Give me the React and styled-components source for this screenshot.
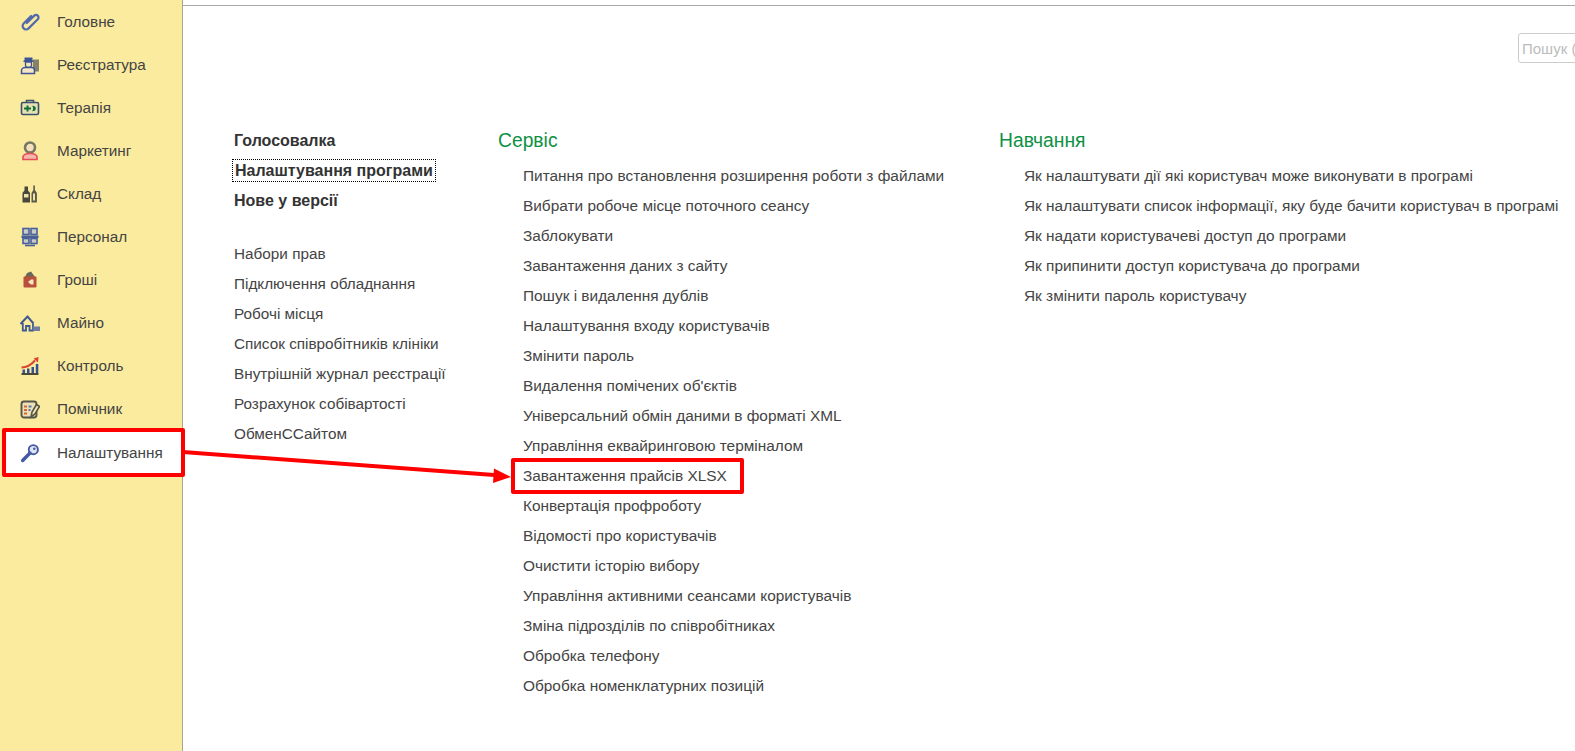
import React from 'react'
import styled, { createGlobalStyle } from 'styled-components'

const Global = createGlobalStyle`
html, body { margin: 0; padding: 0; background: #fff; }
body { font-family: "Liberation Sans", Arial, sans-serif; color: #333; overflow: hidden; }
`

const Clip = () => (
    <svg width="20" height="20" viewBox="0 0 20 20" fill="none">
        <g transform="rotate(45 10 10)">
            <path d="M6.500 5v10.500a3.500 3.500 0 0 0 7 0V2.500a2.500 2.500 0 0 0-5 0V13" stroke="#5269ad" strokeWidth="2.200" strokeLinecap="round" />
        </g>
    </svg>
)
const Clerk = () => (
    <svg width="20" height="20" viewBox="0 0 20 20">
        <rect x="13" y="4.500" width="6" height="12" fill="#85826a" />
        <path d="M4.500 6V2.500h8V6z" fill="#3d5596" />
        <rect x="3.500" y="5.500" width="10" height="1.500" fill="#3d5596" />
        <path d="M5.500 7h6v3.500c0 1-1.500 2-3 2s-3-1-3-2z" fill="#f7e7b4" stroke="#3d5596" strokeWidth="1.300" />
        <path d="M1.500 18.500v-3c0-2 2-3 3.500-3h7c1.500 0 2.500 1 2.500 3v3z" fill="#f4e6c4" stroke="#3d5596" strokeWidth="1.500" />
    </svg>
)
const Medkit = () => (
    <svg width="20" height="20" viewBox="0 0 20 20">
        <path d="M6.500 4.500V2.500h7v2" fill="none" stroke="#39506e" strokeWidth="1.500" />
        <rect x="1.500" y="4.500" width="17" height="12" rx="1.500" fill="#e6e2b4" stroke="#39506e" strokeWidth="1.600" />
        <path d="M4 9.500h2.500V7.500h2v2H11v2H8.500v2h-2v-2H4z" fill="#0f6f36" />
        <path d="M12 7.800c3 0 3.800 1.200 3.800 2.700S15 13.300 12 13.300c1.500-1 1.500-4.500 0-5.500z" fill="#0f6f36" />
    </svg>
)
const Agent = () => (
    <svg width="20" height="20" viewBox="0 0 20 20">
        <circle cx="10" cy="6.500" r="5" fill="#f3e3b8" stroke="#777765" strokeWidth="2.600" />
        <circle cx="10" cy="7" r="2.300" fill="#f6dcc0" />
        <path d="M3 18.500v-2.500c0-2 3-3.500 7-3.500s7 1.500 7 3.500v2.500z" fill="#f6b8a8" stroke="#e2505a" strokeWidth="1.700" />
    </svg>
)
const Bottles = () => (
    <svg width="20" height="20" viewBox="0 0 20 20">
        <path d="M2.500 18.500V9.500c0-1.500 1.500-2 2-3V2.500h3.500v4c.5 1 2 1.500 2 3v9z" fill="#47473a" />
        <path d="M11.500 18.500V9l1.800-3V1.500h1.600V6l2 3v9.500z" fill="#5b5a48" />
        <rect x="4" y="10" width="4.500" height="3.500" fill="#f1e2ae" />
        <rect x="13" y="9.500" width="2" height="7" fill="#f1e2ae" />
    </svg>
)
const Staff = () => (
    <svg width="20" height="20" viewBox="0 0 20 20">
        <rect x="3" y="1.500" width="6" height="6" fill="#c8cbc8" stroke="#48609a" strokeWidth="1.600" />
        <rect x="11" y="1.500" width="6" height="6" fill="#c8cbc8" stroke="#48609a" strokeWidth="1.600" />
        <rect x="1.500" y="8.500" width="17" height="2.500" fill="#48609a" />
        <rect x="3" y="11.500" width="6" height="5" fill="#c8cbc8" stroke="#48609a" strokeWidth="1.600" />
        <rect x="11" y="11.500" width="6" height="5" fill="#c8cbc8" stroke="#48609a" strokeWidth="1.600" />
        <path d="M5 18.500h10" stroke="#48609a" strokeWidth="1.600" />
    </svg>
)
const Money = () => (
    <svg width="20" height="20" viewBox="0 0 20 20">
        <path d="M5 7 7 3l4-1.500L15 7z" fill="#68685a" />
        <rect x="3.500" y="6.500" width="13" height="11" rx="1" fill="#b9503c" />
        <path d="M13.500 9.500h-2.500l-3 2.500 3 2.500h2.500" fill="#f8e6c0" />
    </svg>
)
const House = () => (
    <svg width="20" height="20" viewBox="0 0 20 20">
        <path d="M.5 11 7.500 3.500l6 7" fill="none" stroke="#3f5a92" strokeWidth="2" />
        <path d="M2.800 10v7.500h3.200v-4.500h3.500v4.500h3.500v-7" fill="none" stroke="#3f5a92" strokeWidth="1.800" />
        <rect x="13" y="13.500" width="7.500" height="4.500" fill="#6d7f9c" />
    </svg>
)
const Chart = () => (
    <svg width="20" height="20" viewBox="0 0 20 20">
        <path d="M1.500 11.500c5 0 9-2 13.500-7" fill="none" stroke="#d8442e" strokeWidth="2" />
        <path d="M13.500 2.500 18.500 1l-.5 5.500z" fill="#d8442e" />
        <path d="M2.500 13.500h2.500v3.500H2.500zM7 12.500h2.500V17H7zM11.500 11h2.500v6h-2.500zM15.800 8h2.500v9h-2.500z" fill="#35508e" />
        <rect x="1.500" y="17" width="17" height="2" fill="#4a4a3a" />
    </svg>
)
const Helper = () => (
    <svg width="20" height="20" viewBox="0 0 20 20">
        <rect x="1.500" y="2.500" width="15" height="16" rx="2.500" fill="#ece0b4" stroke="#55554a" strokeWidth="1.900" />
        <path d="M4 7.500h3M4 11h3M4 14.500h3" stroke="#d5683a" strokeWidth="2.200" />
        <path d="M8.500 7.500h3M8.500 11h2" stroke="#5a78b0" strokeWidth="2.200" />
        <path d="m11 18 1-5 4.500-7.500 3 2-4.500 7.500z" fill="#f4e6b0" stroke="#55554a" strokeWidth="1.600" />
    </svg>
)
const KeyIcon = () => (
    <svg width="21" height="21" viewBox="0 0 21 21" fill="none">
        <circle cx="14" cy="6.500" r="4.800" fill="#dfe4f2" stroke="#4459a6" strokeWidth="2" />
        <circle cx="15" cy="5.500" r="1.300" fill="#4459a6" />
        <path d="M10.500 10 2.800 17.800" stroke="#4459a6" strokeWidth="3.600" strokeLinecap="round" />
    </svg>
)

const nav = [
    { label: 'Головне', icon: Clip },
    { label: 'Реєстратура', icon: Clerk },
    { label: 'Терапія', icon: Medkit },
    { label: 'Маркетинг', icon: Agent },
    { label: 'Склад', icon: Bottles },
    { label: 'Персонал', icon: Staff },
    { label: 'Гроші', icon: Money },
    { label: 'Майно', icon: House },
    { label: 'Контроль', icon: Chart },
    { label: 'Помічник', icon: Helper },
    { label: 'Налаштування', icon: KeyIcon, active: true },
]

const boldLinks = ['Голосовалка', 'Налаштування програми', 'Нове у версії']
const plainLinks = ['Набори прав', 'Підключення обладнання', 'Робочі місця', 'Список співробітників клініки', 'Внутрішній журнал реєстрації', 'Розрахунок собівартості', 'ОбменССайтом']
const service = [
    'Питання про встановлення розширення роботи з файлами',
    'Вибрати робоче місце поточного сеансу',
    'Заблокувати',
    'Завантаження даних з сайту',
    'Пошук і видалення дублів',
    'Налаштування входу користувачів',
    'Змінити пароль',
    "Видалення помічених об'єктів",
    'Універсальний обмін даними в форматі XML',
    'Управління еквайринговою терміналом',
    'Завантаження прайсів XLSX',
    'Конвертація профроботу',
    'Відомості про користувачів',
    'Очистити історію вибору',
    'Управління активними сеансами користувачів',
    'Зміна підрозділів по співробітниках',
    'Обробка телефону',
    'Обробка номенклатурних позицій',
]
const learning = [
    'Як налаштувати дії які користувач може виконувати в програмі',
    'Як налаштувати список інформації, яку буде бачити користувач в програмі',
    'Як надати користувачеві доступ до програми',
    'Як припинити доступ користувача до програми',
    'Як змінити пароль користувачу',
]

const App = () => {
    return (
        <Page>
            <Global />
            <Sidebar>
                {nav.map((item) => (
                    <NavItem key={item.label} $active={item.active}>
                        <NavIcon><item.icon /></NavIcon>
                        <span>{item.label}</span>
                    </NavItem>
                ))}
            </Sidebar>
            <Main>
                <SearchBox>Пошук (</SearchBox>
                <Columns>
                    <LeftColumn>
                        <BoldList>
                            {boldLinks.map((text, i) => (
                                <BoldLink key={text} $focused={i === 1}>{text}</BoldLink>
                            ))}
                        </BoldList>
                        <PlainList>
                            {plainLinks.map((text) => <PlainLink key={text}>{text}</PlainLink>)}
                        </PlainList>
                    </LeftColumn>
                    <ServiceColumn>
                        <GroupTitle>Сервіс</GroupTitle>
                        <GroupList>
                            {service.map((text) => (
                                <GroupLink key={text} $marked={text.endsWith('XLSX')}>{text}</GroupLink>
                            ))}
                        </GroupList>
                    </ServiceColumn>
                    <div>
                        <GroupTitle>Навчання</GroupTitle>
                        <GroupList>
                            {learning.map((text) => <GroupLink key={text}>{text}</GroupLink>)}
                        </GroupList>
                    </div>
                </Columns>
            </Main>
            <Arrow width="340" height="40" viewBox="0 0 340 40">
                <path d="M0 3 L318 26.500" stroke="#f00" strokeWidth="4" />
                <path d="M328 28 L311 19.500 L310 34 Z" fill="#f00" />
            </Arrow>
        </Page>
    )
}

const Page = styled.div`
position: relative;
display: flex;
width: 1575px;
height: 751px;
overflow: hidden;
`
const Sidebar = styled.nav`
flex: 0 0 183px;
min-width: 0;
box-sizing: border-box;
height: 751px;
background: #fbeb9e;
border-right: 1px solid #a9a68f;
`
const NavItem = styled.div`
display: flex;
align-items: center;
height: 43px;
font-size: 15.300px;
color: #444;
padding-left: 20px;
box-sizing: border-box;
${(p) => p.$active && `
    position: relative;
    width: 183px;
    height: 49px;
    margin: -2px 0 0 2px;
    background: #fff;
    border: 4px solid #f00;
    border-radius: 2px;
    padding-left: 14px;
    z-index: 2;
`}
`
const NavIcon = styled.span`
display: flex;
width: 20px;
height: 20px;
margin-right: 17px;
`
const Main = styled.main`
position: relative;
flex: 1;
min-width: 0;
border-top: 1px solid #a8a8a8;
margin-top: 5px;
`
const SearchBox = styled.div`
position: absolute;
top: 27px;
left: 1335px;
width: 80px;
height: 30px;
box-sizing: border-box;
border: 1px solid #ccc;
border-radius: 3px;
padding: 6px 0 0 3px;
font-size: 15px;
color: #bcbcbc;
white-space: nowrap;
`
const Columns = styled.div`
display: flex;
padding: 121px 0 0 51px;
white-space: nowrap;
`
const LeftColumn = styled.div`
flex: 0 0 264px;
`
const ServiceColumn = styled.div`
flex: 0 0 501px;
`
const BoldList = styled.div`
display: flex;
flex-direction: column;
`
const BoldLink = styled.div`
align-self: flex-start;
box-sizing: border-box;
height: 30px;
line-height: 28px;
font-size: 16px;
font-weight: 700;
color: #333;
${(p) => p.$focused && `
    height: 23px;
    line-height: 21px;
    margin: 2px 0 5px -2px;
    padding: 0 2px;
    border: 1px dotted #000;
`}
`
const PlainList = styled.div`
margin-top: 22px;
`
const PlainLink = styled.div`
height: 30px;
line-height: 30px;
font-size: 15.300px;
color: #444;
`
const GroupTitle = styled.div`
height: 30px;
line-height: 28px;
font-size: 19.300px;
color: #0f9145;
`
const GroupList = styled.div`
margin-top: 4px;
padding-left: 25px;
`
const GroupLink = styled.div`
position: relative;
height: 30px;
line-height: 30px;
font-size: 15.400px;
color: #444;
${(p) => p.$marked && `
    &::after {
        content: '';
        position: absolute;
        left: -12px;
        top: -3px;
        width: 233px;
        height: 36px;
        box-sizing: border-box;
        border: 4px solid #f00;
        border-radius: 2px;
    }
`}
`
const Arrow = styled.svg`
position: absolute;
left: 183px;
top: 449px;
`

export default App
